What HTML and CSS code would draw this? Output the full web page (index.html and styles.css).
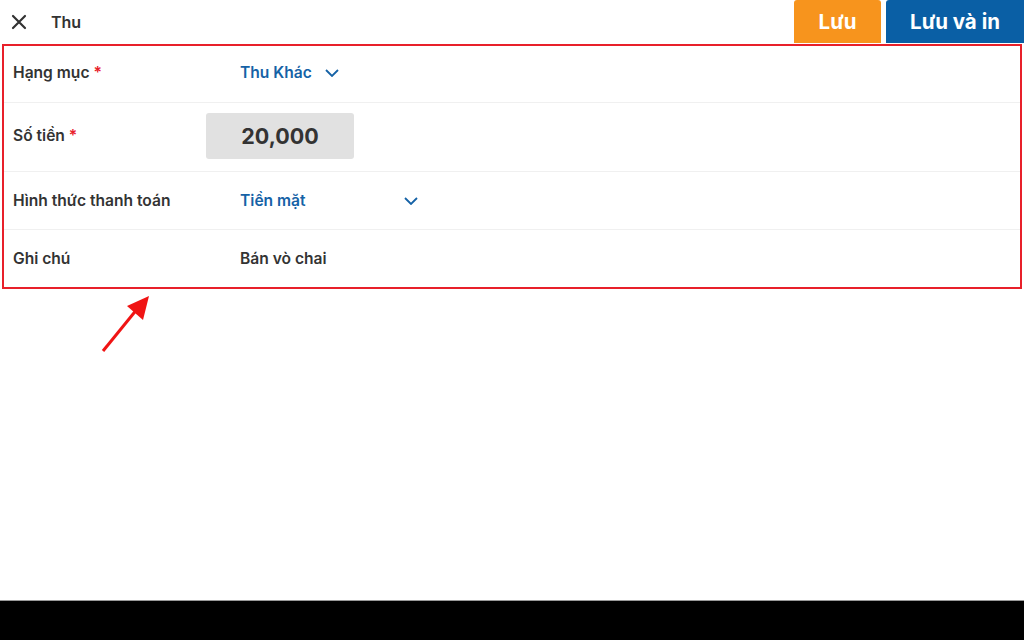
FILE: index.html
```html
<!DOCTYPE html>
<html lang="vi">
<head>
  <meta charset="UTF-8">
  <meta name="viewport" content="width=device-width, initial-scale=1.0">
  <title>Thu</title>
  <link rel="stylesheet" href="styles.css">
</head>
<body>
  <div class="screen">
    <!-- Thanh tiêu đề -->
    <header class="topbar">
      <button class="close-btn" aria-label="Đóng">
        <svg width="16" height="16" viewBox="0 0 16 16"><path d="M2 2 L14 14 M14 2 L2 14" stroke="#333" stroke-width="2.2" stroke-linecap="round"/></svg>
      </button>
      <span class="title">Thu</span>
      <div class="actions">
        <button class="btn btn-save">Lưu</button>
        <button class="btn btn-print">Lưu và in</button>
      </div>
    </header>

    <!-- Form phiếu thu -->
    <main class="content">
      <section class="form">
        <div class="row row-first">
          <div class="label">Hạng mục <span class="req">*</span></div>
          <div class="value select">
            <span>Thu Khác</span>
            <svg class="chev" width="14" height="8" viewBox="0 0 14 8"><path d="M1 1 L7 7 L13 1" fill="none" stroke="#1562a6" stroke-width="1.8"/></svg>
          </div>
        </div>
        <div class="row row-amount">
          <div class="label">Số tiền <span class="req">*</span></div>
          <div class="amount">20,000</div>
        </div>
        <div class="row">
          <div class="label">Hình thức thanh toán</div>
          <div class="value select wide">
            <span>Tiền mặt</span>
            <svg class="chev" width="14" height="8" viewBox="0 0 14 8"><path d="M1 1 L7 7 L13 1" fill="none" stroke="#1562a6" stroke-width="1.8"/></svg>
          </div>
        </div>
        <div class="row row-last">
          <div class="label">Ghi chú</div>
          <div class="value note">Bán vò chai</div>
        </div>
      </section>

      <!-- Mũi tên chú thích -->
      <svg class="pointer" width="60" height="70" viewBox="0 0 60 70">
        <line x1="3" y1="57" x2="38" y2="14" stroke="#f01414" stroke-width="3"/>
        <polygon points="49,2 43,26 27,12" fill="#f01414"/>
      </svg>
    </main>

    <footer class="navbar"></footer>
  </div>
</body>
</html>
```

FILE: styles.css
```css
/* Cơ bản */
body {
  margin: 0;
  font-family: Inter, "Noto Sans", sans-serif;
  color: #333;
  background: #fff;
}

.screen {
  width: 1024px;
  height: 640px;
  display: flex;
  flex-direction: column;
}

/* Thanh tiêu đề */
.topbar {
  height: 44px;
  display: flex;
  align-items: center;
  flex-shrink: 0;
}

.close-btn {
  border: none;
  background: none;
  padding: 0;
  margin-left: 11px;
  width: 16px;
  height: 16px;
  display: flex;
}

.title {
  margin-left: 24px;
  font-size: 16px;
  font-weight: 600;
  color: #333;
}

.actions {
  margin-left: auto;
  display: flex;
  align-self: stretch;
  gap: 5px;
  padding-bottom: 1px;
}

.btn {
  border: none;
  color: #fff;
  font-family: inherit;
  font-size: 20.5px;
  font-weight: 700;
  border-radius: 3px 3px 0 0;
  cursor: pointer;
}

.btn-save {
  width: 87px;
  background: #f7941d;
}

.btn-print {
  width: 138px;
  background: #0a5fa5;
  border-radius: 3px 0 0 0;
}

/* Nội dung */
.content {
  flex: 1;
  position: relative;
  padding: 0 2px;
}

.form {
  border: 2px solid #e8202a;
}

.row {
  display: flex;
  align-items: center;
  box-sizing: border-box;
  height: 58px;
  padding-left: 9px;
  border-bottom: 1px solid #f0f0f0;
}

.row-first {
  height: 57px;
  padding-bottom: 3px;
}

.row-amount {
  height: 69px;
  padding-bottom: 3px;
}

.row-last {
  height: 57px;
  border-bottom: none;
}

.label {
  width: 227px;
  font-size: 15.6px;
  font-weight: 600;
  color: #333;
}

.req {
  color: #e8202a;
}

.value {
  font-size: 15.6px;
  font-weight: 600;
}

.select {
  color: #1562a6;
  display: flex;
  align-items: center;
  gap: 13px;
}

.select.wide {
  width: 178px;
  justify-content: space-between;
}

.note {
  color: #333;
}

.amount {
  margin-left: -34px;
  width: 148px;
  height: 46px;
  background: #e1e1e1;
  border-radius: 3px;
  display: flex;
  align-items: center;
  justify-content: center;
  font-size: 21.5px;
  font-weight: 700;
  color: #333;
}

/* Mũi tên chú thích */
.pointer {
  position: absolute;
  left: 100px;
  top: 250px;
}

/* Thanh dưới */
.navbar {
  height: 39px;
  background: #000;
  border-top: 1px solid #999;
  flex-shrink: 0;
}
```
